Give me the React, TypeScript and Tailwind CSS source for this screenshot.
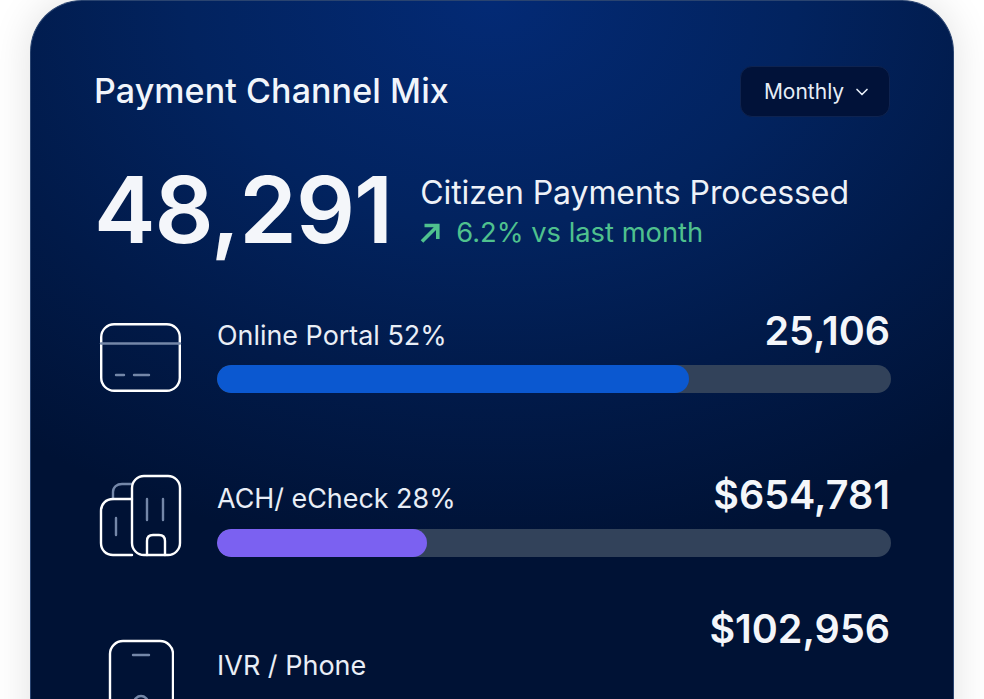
import { ChevronDown } from "lucide-react";

const white = "#ffffff";
const dim = "#7487a8";

function CardIcon() {
	return (
		<svg width="84" height="72" viewBox="0 0 84 72" fill="none" strokeWidth="2.4" strokeLinecap="round">
			<rect x="2.2" y="2.2" width="78.6" height="66.6" rx="13" stroke={white} />
			<path d="M2 21.5H81" stroke={dim} />
			<path d="M17 53H25M35 53H50" stroke={dim} />
		</svg>
	);
}

function BuildingIcon() {
	return (
		<svg width="84" height="84" viewBox="0 0 84 84" fill="none" strokeWidth="2.4" strokeLinecap="round">
			<path d="M14 25V18C14 13 18 10 23 10H33" stroke={dim} />
			<path d="M33 81H14C7 81 2 76 2 69V37C2 30 7 25 14 25H33" stroke={white} />
			<rect x="33" y="2" width="48" height="79" rx="12" stroke={white} />
			<path d="M48 81V67C48 63 50 61 54 61H60C64 61 66 63 66 67V81" stroke={white} />
			<path d="M48 25V46M64 25V46M17 44V61" stroke={dim} />
		</svg>
	);
}

function PhoneIcon() {
	return (
		<svg width="66" height="90" viewBox="0 0 66 90" fill="none" strokeWidth="2.4" strokeLinecap="round">
			<rect x="2" y="2" width="63" height="100" rx="13" stroke={white} />
			<path d="M25 16H41" stroke={dim} />
			<circle cx="33" cy="64" r="7" stroke={dim} />
		</svg>
	);
}

function Bar({ fill, width }: { fill: string; width: number }) {
	return (
		<div className="h-7 w-full overflow-hidden rounded-full bg-[#32425a]">
			<div className={`h-full rounded-full ${fill}`} style={{ width: `${width}%` }} />
		</div>
	);
}

export default function App() {
	return (
		<div
			className="h-[699px] w-full overflow-hidden bg-white px-[30px]"
			style={{ fontFamily: "Inter, 'Liberation Sans', sans-serif" }}
		>
			<div className="h-[760px] rounded-t-[52px] border-x border-t border-[#2a4470] bg-[radial-gradient(ellipse_760px_560px_at_50%_0%,#032a75_0%,#02235f_40%,#011a49_70%,#001235_100%)] pl-[63px] pr-[62px] shadow-[0_0_40px_rgba(0,0,0,0.12)]">
				<div className="flex items-start justify-between pt-[65px]">
					<h1 className="mt-[3px] text-[34px] leading-[44px] font-medium tracking-[0.1px] text-[#f1f5fb]">
						Payment Channel Mix
					</h1>
					<button className="mr-[1px] flex h-[51px] w-[150px] items-center justify-center gap-[8px] rounded-xl border border-[#0e2350] bg-[#011239] pl-[6px] text-[21px] text-[#e6edf7]">
						Monthly
						<ChevronDown size={20} strokeWidth={2} />
					</button>
				</div>

				<div className="mt-[34px] flex items-center gap-[28px]">
					<div className="text-[92.5px] leading-[116px] font-semibold tracking-[-1px] text-[#f4f6fa]">48,291</div>
					<div className="pt-[8px]">
						<div className="text-[32px] leading-[40px] tracking-[-0.08px] text-[#eef2f8]">Citizen Payments Processed</div>
						<div className="flex items-center gap-[16px] text-[27.3px] leading-[40px] text-[#4fc18e]">
							<svg width="20" height="20" viewBox="0 0 20 20" fill="none" stroke="#4fc18e" strokeWidth="3.6">
								<path d="M2 18.5L17 3.5M4.5 2.5H17.8V16" />
							</svg>
							6.2% vs last month
						</div>
					</div>
				</div>

				<div className="mt-[37px] flex items-center gap-[34px] pl-[5px]">
					<div className="mt-[18px] flex w-[84px] shrink-0 justify-center">
						<CardIcon />
					</div>
					<div className="flex-1">
						<div className="flex items-center justify-between">
							<span className="mt-[7px] text-[26.9px] leading-[36px] text-[#e9eef6]">Online Portal 52%</span>
							<span className="mr-[1px] text-[39.5px] leading-[52px] font-semibold text-[#f4f6fa]">25,106</span>
						</div>
						<div className="mt-[8px]">
							<Bar fill="bg-[#0b58d0]" width={70.1} />
						</div>
					</div>
				</div>

				<div className="mt-[74px] flex items-center gap-[34px] pl-[5px]">
					<div className="mt-[6px] flex w-[84px] shrink-0 justify-center">
						<BuildingIcon />
					</div>
					<div className="flex-1">
						<div className="flex items-center justify-between">
							<span className="mt-[6px] text-[26.9px] leading-[36px] text-[#e9eef6]">ACH/ eCheck 28%</span>
							<span className="mr-[1px] text-[39.5px] leading-[52px] font-semibold text-[#f4f6fa]">$654,781</span>
						</div>
						<div className="mt-[8px]">
							<Bar fill="bg-[#7b61f1]" width={31.2} />
						</div>
					</div>
				</div>

				<div className="mt-[45px] flex items-start gap-[34px] pl-[5px]">
					<div className="mt-[36px] flex w-[84px] shrink-0 justify-center">
						<PhoneIcon />
					</div>
					<div className="flex-1">
						<div className="mr-[1px] text-right text-[39.5px] leading-[52px] font-semibold text-[#f4f6fa]">$102,956</div>
						<div className="-mt-[7px] text-[27px] leading-[36px] text-[#e9eef6]">IVR / Phone</div>
					</div>
				</div>
			</div>
		</div>
	);
}
